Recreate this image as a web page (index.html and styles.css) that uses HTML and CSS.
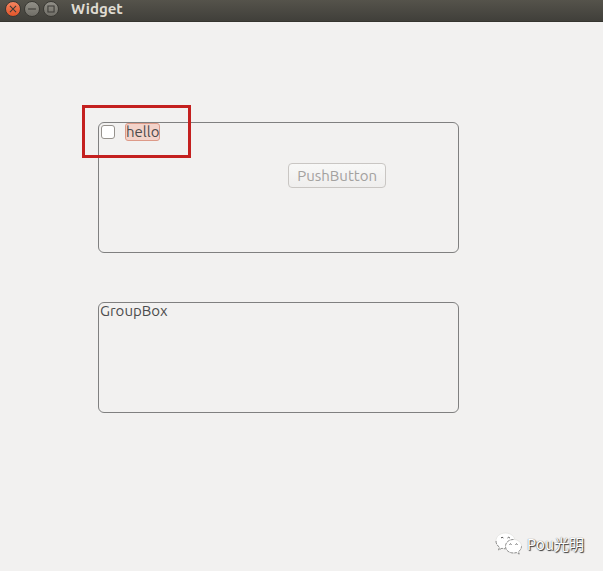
FILE: index.html
```html
<!DOCTYPE html>
<html lang="en">
<head>
    <meta charset="UTF-8">
    <meta name="viewport" content="width=device-width, initial-scale=1.0">
    <title>Widget</title>
    <link rel="stylesheet" href="styles.css">
</head>
<body>
    <header class="titlebar">
        <div class="window-buttons">
            <button type="button" class="window-button close" aria-label="Close">
                <svg viewBox="0 0 16 16"><path d="M4.500 4.500l7 7M11.500 4.500l-7 7"/></svg>
            </button>
            <button type="button" class="window-button" aria-label="Minimize">
                <svg viewBox="0 0 16 16"><path d="M3.500 8h9"/></svg>
            </button>
            <button type="button" class="window-button" aria-label="Maximize">
                <svg viewBox="0 0 16 16"><path d="M4.500 4.500h7v7h-7z"/></svg>
            </button>
        </div>
        <h1>Widget</h1>
    </header>

    <main class="content">
        <section class="group-box checkable">
            <div class="group-title">
                <input type="checkbox" id="hello">
                <label for="hello">hello</label>
            </div>
            <div class="group-body">
                <button type="button" class="push-button" disabled>PushButton</button>
            </div>
            <div class="highlight"></div>
        </section>

        <section class="group-box">
            <h2 class="group-title">GroupBox</h2>
        </section>
    </main>

    <footer class="watermark">
        <svg class="bubbles" viewBox="0 0 28 24">
            <path class="bubble" d="M10.500 1C5 1 1 4.500 1 9c0 2.600 1.300 4.700 3.500 6.200L3.600 18l3.300-1.700c1.200.3 2.400.5 3.600.5 5.300 0 9.500-3.400 9.500-7.800S15.800 1 10.500 1z"/>
            <path class="outline" d="M1 9c0 2.600 1.300 4.700 3.500 6.200L3.600 18l3.300-1.700c1.200.3 2.400.5 3.600.5"/>
            <path class="bubble" d="M18.500 7.500c-4.600 0-8 3-8 6.800s3.400 6.700 8 6.700c1 0 2-.1 2.900-.4l2.800 1.500-.7-2.500c1.900-1.300 3-3.200 3-5.300 0-3.800-3.400-6.800-8-6.800z"/>
            <path class="outline" d="M18.500 7.500c-4.600 0-8 3-8 6.800s3.400 6.700 8 6.700c1 0 2-.1 2.900-.4l2.800 1.500-.7-2.500c1.900-1.300 3-3.200 3-5.300"/>
            <path class="eyes" d="M6 6q1-1.500 2.400 0M12.500 6q1-1.500 2.400 0M14.500 12.500q1-1.200 2 0M20.500 12.500q1-1.200 2 0"/>
        </svg>
        <span>Pou光明</span>
    </footer>
</body>
</html>
```

FILE: styles.css
```css
:root {
    --window-bg: #f2f1f0;
    --text-color: #4c4c4c;
    --border-color: #808080;
    --highlight-color: #c4201f;
}

* {
    margin: 0;
    padding: 0;
    box-sizing: border-box;
}

body {
    display: flex;
    flex-direction: column;
    min-height: 100vh;
    background-color: var(--window-bg);
    color: var(--text-color);
    font-family: "Ubuntu", "Noto Sans", "Noto Sans CJK SC", sans-serif;
    font-size: 15px;
    line-height: 16px;
}

/* Title bar */
.titlebar {
    display: flex;
    align-items: center;
    gap: 12px;
    height: 22px;
    padding: 0 5px 4px;
    background: linear-gradient(#55534b, #403f3a);
    border-bottom: 1px solid #35342f;
}

.titlebar h1 {
    color: #dfdbd2;
    font-size: 15px;
    font-weight: 700;
}

.window-buttons {
    display: flex;
    gap: 3px;
}

.window-button {
    width: 16px;
    height: 16px;
    border: 1px solid #3a3934;
    border-radius: 50%;
    background: linear-gradient(#929088, #706e67);
}

.window-button.close {
    background: linear-gradient(#f58560, #e2552a);
}

.window-button svg {
    display: block;
    width: 100%;
    fill: none;
    stroke: #3c3b37;
    stroke-width: 1.2;
}

/* Group boxes */
.content {
    display: flex;
    flex-direction: column;
    gap: 49px;
    padding: 100px 144px 0 98px;
}

.group-box {
    position: relative;
    min-height: 111px;
    border: 1px solid var(--border-color);
    border-radius: 6px;
}

.group-box.checkable {
    min-height: 131px;
}

.group-title {
    display: flex;
    align-items: center;
    gap: 10px;
    padding-left: 1px;
    font-size: 15px;
    font-weight: 400;
}

.group-title input {
    appearance: none;
    width: 14px;
    height: 14px;
    margin-left: 1px;
    border: 1px solid #96928d;
    border-radius: 3px;
    background-color: #fff;
}

.group-title input:checked {
    background-color: #f07746;
}

.group-title label {
    border: 1px solid #dd9a88;
    border-radius: 3px;
    background-color: #f3d3ca;
}

.group-body {
    display: flex;
    justify-content: flex-end;
    padding: 22px 72px;
}

.push-button {
    height: 25px;
    padding: 0 8px;
    border: 1px solid #c9c6c3;
    border-radius: 4px;
    background: linear-gradient(#f8f8f7, #efeeed);
    color: #a3a19f;
    font: inherit;
}

.highlight {
    position: absolute;
    top: -18px;
    left: -17px;
    width: 109px;
    height: 53px;
    border: 3px solid var(--highlight-color);
    pointer-events: none;
}

/* Watermark */
.watermark {
    display: flex;
    align-items: center;
    justify-content: flex-end;
    gap: 4px;
    margin-top: auto;
    padding: 16px 19px 15px;
    color: #fff;
    font-family: "Noto Sans CJK SC", sans-serif;
    font-size: 15px;
    text-shadow: 1px 1px 1px #333, 0 0 1px #555;
}

.bubbles {
    width: 28px;
    height: 24px;
}

.bubble {
    fill: #fff;
    stroke: #dcdbd9;
    stroke-width: 0.6;
}

.outline {
    fill: none;
    stroke: #777;
    stroke-width: 0.8;
    stroke-dasharray: 3 1;
}

.eyes {
    fill: none;
    stroke: #555;
    stroke-width: 1;
}
```
